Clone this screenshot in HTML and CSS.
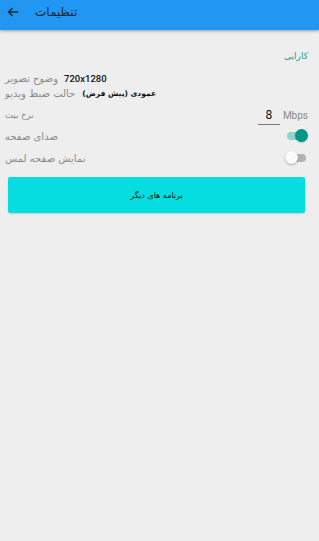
FILE: index.html
```html
<!DOCTYPE html>
<html lang="fa">
<head>
<meta charset="utf-8">
<link rel="stylesheet" href="styles.css">
</head>
<body>
<header class="appbar">
  <svg class="back" width="12" height="10" viewBox="0 0 12 10"><path d="M11 5H1.5M5.5 1L1.5 5l4 4" fill="none" stroke="#1c2733" stroke-width="1.4"/></svg>
  <span class="title">تنظیمات</span>
</header>
<main class="content">
  <div class="section">کارایی</div>
  <div class="row info"><span class="label">وضوح تصویر</span><span class="value res">720x1280</span></div>
  <div class="row info"><span class="label">حالت ضبط ویدیو</span><span class="value mode">عمودی (پیش فرض)</span></div>
  <div class="row rate"><span class="label small">نرخ بیت</span><span class="spacer"></span><span class="num">8</span><span class="unit">Mbps</span></div>
  <div class="row sw"><span class="label">صدای صفحه</span><span class="spacer"></span><span class="switch on"><span class="track"></span><span class="thumb"></span></span></div>
  <div class="row sw"><span class="label">نمایش صفحه لمس</span><span class="spacer"></span><span class="switch off"><span class="track"></span><span class="thumb"></span></span></div>
  <button class="btn">برنامه های دیگر</button>
</main>
</body>
</html>
```
FILE: styles.css
```css
* { box-sizing: border-box; }
html, body { margin: 0; padding: 0; }
body {
  width: 319px;
  height: 541px;
  background: #eeeeee;
  font-family: "DejaVu Sans", "Noto Sans", sans-serif;
  overflow: hidden;
}
.appbar {
  height: 30px;
  background: #2196f3;
  display: flex;
  align-items: flex-start;
  padding: 6px 0 0 7px;
  box-shadow: 0 1px 3px rgba(0,0,0,0.35);
  position: relative;
}
.back { margin-top: 1px; }
.title {
  margin-left: 16px;
  font-size: 12px;
  line-height: 12px;
  color: #1c2733;
}
.content {
  display: flex;
  flex-direction: column;
  padding: 19px 11px 0 5px;
}
.section {
  direction: rtl;
  text-align: right;
  color: #14a294;
  font-size: 9px;
  line-height: 14px;
  height: 14px;
}
.row {
  display: flex;
  align-items: center;
  direction: ltr;
}
.info { height: 15px; }
.section + .info { margin-top: 8px; }
.label {
  color: #8a8a8a;
  font-size: 10px;
  white-space: nowrap;
}
.label.small { font-size: 8.5px; }
.value {
  color: #111;
  margin-left: 6px;
  white-space: nowrap;
}
.res { font-family: "Roboto", sans-serif; font-size: 9.5px; font-weight: 500; }
.mode { font-size: 7.5px; font-weight: bold; margin-left: 7px; }
.spacer { flex: 1; }
.rate { height: 20px; margin-top: 4px; }
.num {
  width: 22px;
  text-align: center;
  font-family: "Roboto", sans-serif;
  font-size: 12px;
  color: #111;
  border-bottom: 1px solid #777;
  padding-bottom: 2px;
  margin-top: 2px;
}
.unit {
  font-family: "Roboto", sans-serif;
  font-size: 10px;
  color: #888;
  margin-left: 3px;
}
.sw { height: 22px; }
.switch {
  position: relative;
  width: 23px;
  height: 14px;
  display: block;
}
.track {
  position: absolute;
  left: 2px; right: 2px; top: 3px;
  height: 8px;
  border-radius: 4px;
}
.thumb {
  position: absolute;
  top: 0;
  width: 13px;
  height: 13px;
  border-radius: 50%;
}
.on .track { background: #8fd3cc; }
.on .thumb { right: 0; background: #009688; box-shadow: 0 1px 1px rgba(0,0,0,0.2); }
.off .track { background: #b3b3b3; }
.off .thumb { left: 0; background: #fafafa; box-shadow: 0 1px 2px rgba(0,0,0,0.3); }
.btn {
  margin: 8px 3px 0 3px;
  height: 36px;
  border: none;
  border-radius: 2px;
  background: #05dde0;
  color: #111;
  font-family: "DejaVu Sans", sans-serif;
  font-size: 8px;
  box-shadow: 0 1px 2px rgba(0,0,0,0.15);
}
```
